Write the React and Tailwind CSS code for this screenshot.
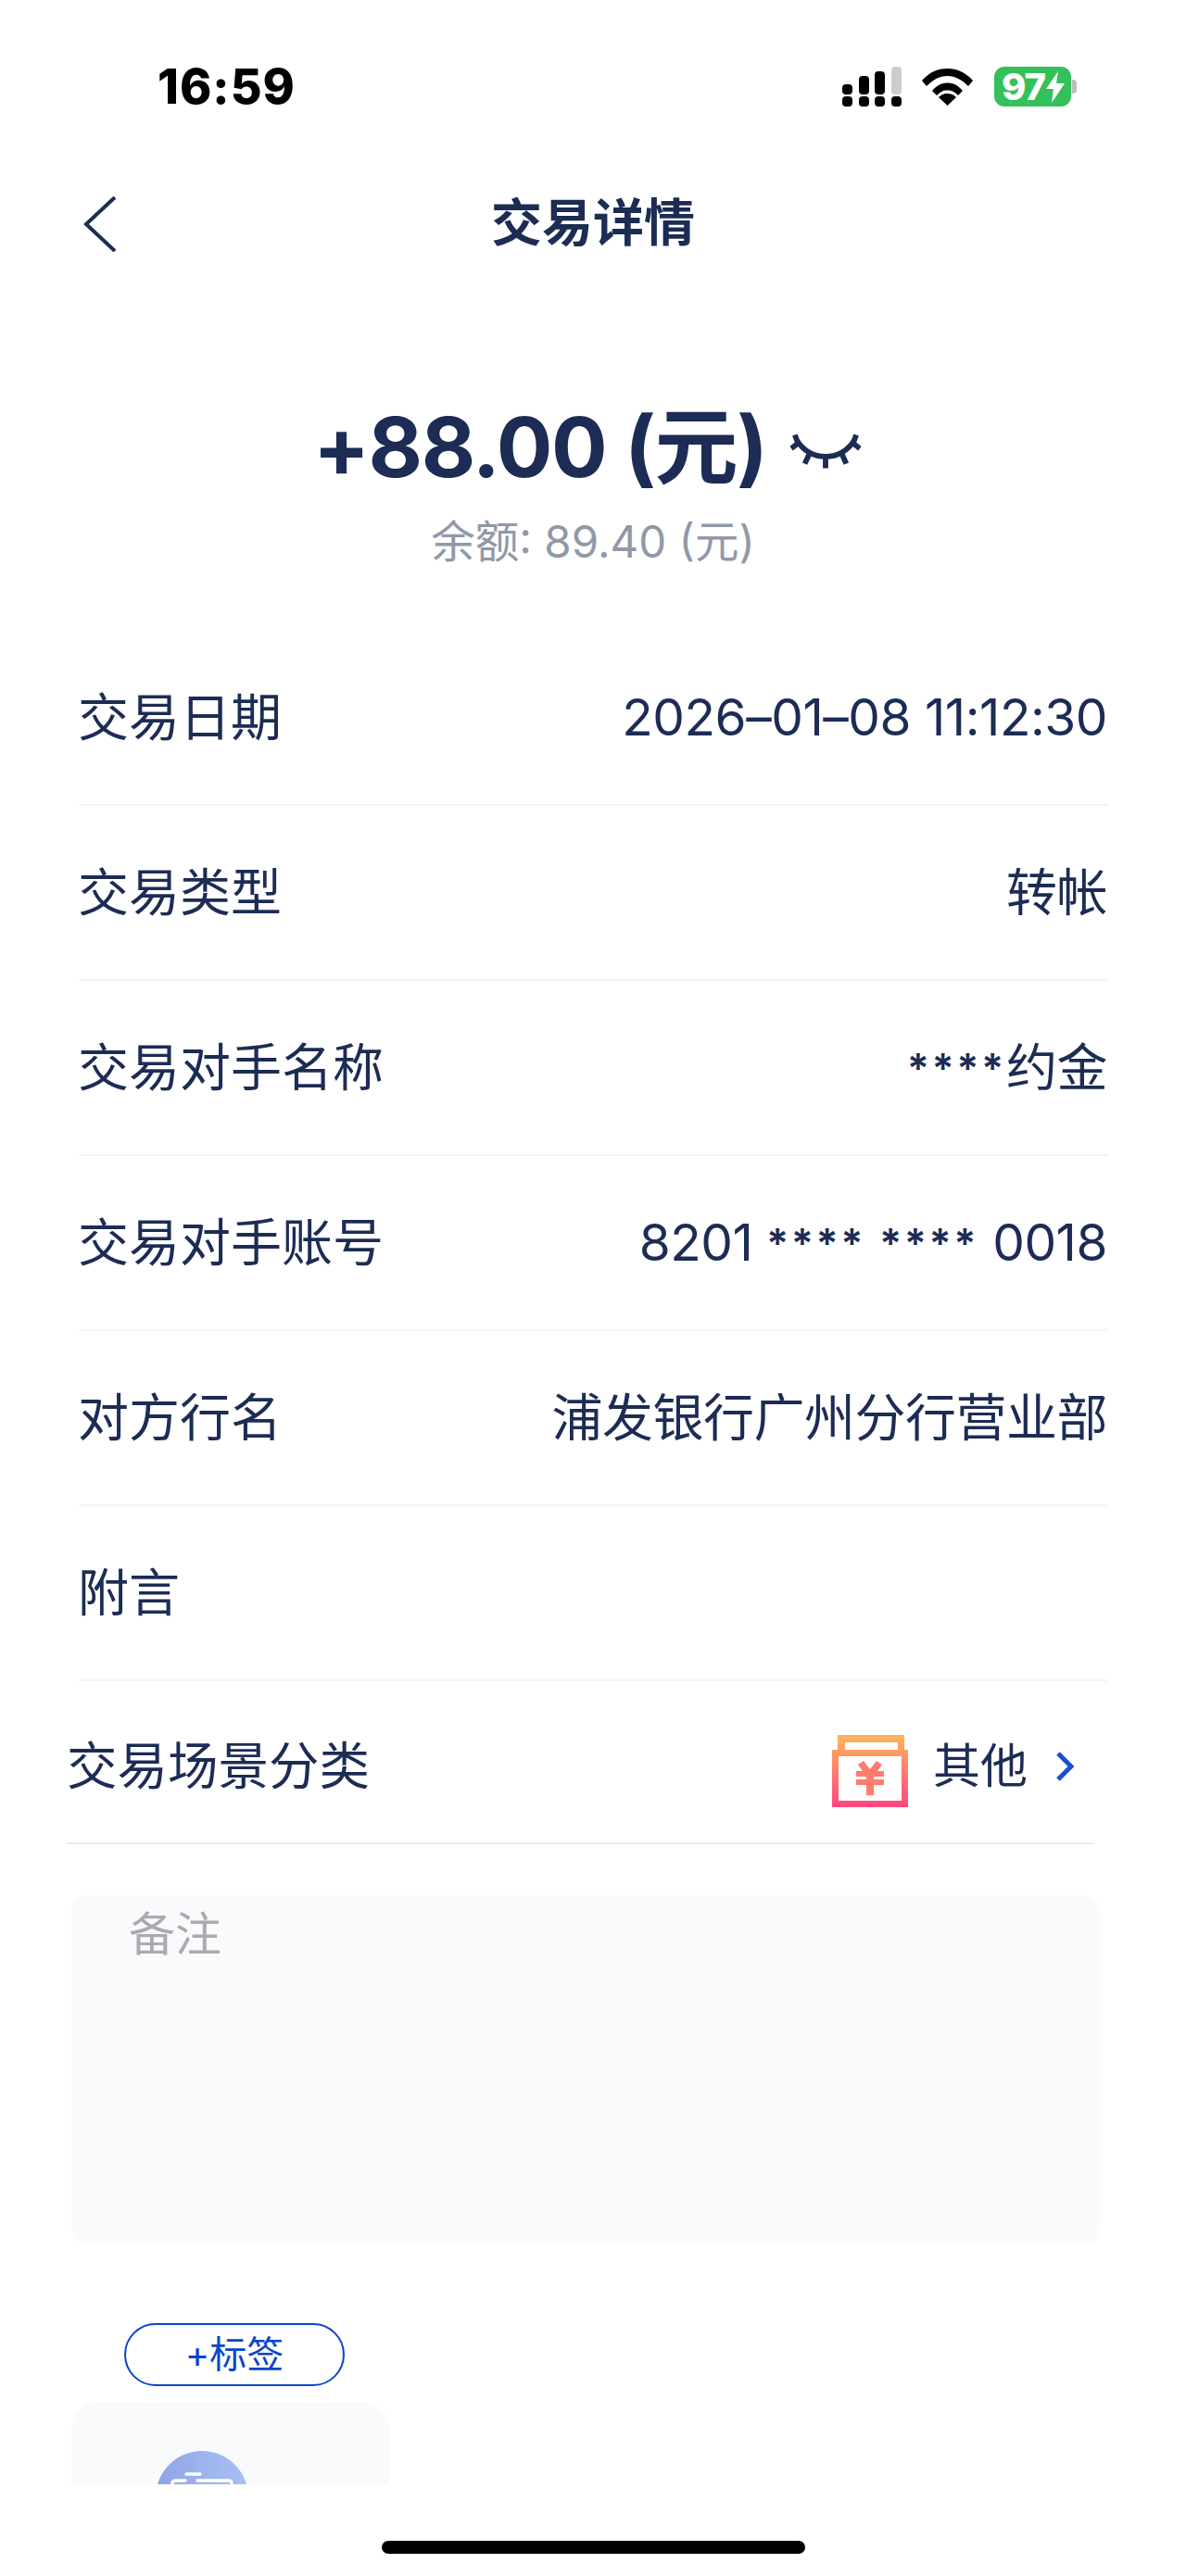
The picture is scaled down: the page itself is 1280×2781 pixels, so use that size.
import React from "react";

function Stars() {
  return <span className="align-[3px] text-[44px] font-semibold tracking-[3px]">****</span>;
}

function Row({ label, value }) {
  return (
    <div className="ml-[85px] mr-[85px] flex h-[189px] items-center justify-between border-b-2 border-[#f3f4f6] text-[55px] text-[#1c2c54]">
      <span className="-ml-[1px]">{label}</span>
      <span className="tracking-[-0.5px]">{value}</span>
    </div>
  );
}

function Signal() {
  const top = [[0, 19, 11], [18, 10, 20], [35, 5, 25]];
  return (
    <svg width="64" height="43" viewBox="0 0 64 43" className="block">
      {top.map(([x, y, h]) => <rect key={x} x={x} y={y} width="11" height={h} rx="4" fill="#000" />)}
      <rect x="53" y="0" width="11" height="30" rx="4" fill="#cccccc" />
      {[0, 18, 35, 53].map((x) => <rect key={x} x={x} y="32" width="11" height="11" rx="4" fill="#000" />)}
    </svg>
  );
}

function Wifi() {
  return (
    <svg width="55" height="40" viewBox="0 0 55 40" className="block">
      <path d="M0 13C8 4 17 0 27.500 0S47 4 55 13L50 19C43 12 36 8 27.500 8S12 12 5 19Z" fill="#000" />
      <path d="M11 24C16 18 21 15.500 27.500 15.500S39 18 44 24L39 29C35 25 32 23.500 27.500 23.500S20 25 16 29Z" fill="#000" />
      <path d="M27.500 40L18 31C21 28 24 27 27.500 27S34 28 37 31Z" fill="#000" />
    </svg>
  );
}

function Battery() {
  return (
    <div className="flex items-center">
      <div className="flex h-[43px] w-[83px] items-center justify-center rounded-[11px] bg-[#34c15c] pl-[2px] font-['Inter'] text-[40px] font-extrabold leading-none text-white">
        <span className="tracking-[-1px]">97</span>
        <svg width="22" height="34" viewBox="0 0 22 34" className="block">
          <path d="M14 0L1 19H9L7 34L21 13H12Z" fill="#fff" />
        </svg>
      </div>
      <div className="ml-[1px] h-[15px] w-[5px] rounded-r-[4px] bg-[#bdbdbd]" />
    </div>
  );
}

function StatusBar() {
  return (
    <div className="flex h-[188px] items-start justify-between pl-[170px] pr-[118px] pt-[72px]">
      <span className="font-['Inter'] text-[52px] font-extrabold leading-[44px] tracking-[1px] text-black">16:59</span>
      <div className="flex items-center">
        <Signal />
        <div className="ml-[22px]"><Wifi /></div>
        <div className="ml-[23px]"><Battery /></div>
      </div>
    </div>
  );
}

function Nav() {
  return (
    <div className="relative flex h-[104px] items-center justify-center">
      <svg width="36" height="60" viewBox="0 0 36 60" className="absolute left-[90px] top-[24px]">
        <path d="M34 1L3 30L34 59" fill="none" stroke="#1c2c54" strokeWidth="4" />
      </svg>
      <span className="text-[55px] font-bold text-[#1c2c54]">交易详情</span>
    </div>
  );
}

function ClosedEye() {
  return (
    <svg width="76" height="38" viewBox="0 0 78 38" className="block">
      <path d="M7 7C15 19 25 25 39 25S63 19 71 7" fill="none" stroke="#1c2c54" strokeWidth="6" />
      <path d="M39 25V38M21 22L16 33M57 22L62 33M9 10L1 16M69 10L77 16M8 9L5 1M70 9L73 1" fill="none" stroke="#1c2c54" strokeWidth="6" />
    </svg>
  );
}

function CategoryIcon() {
  return (
    <svg width="82" height="78" viewBox="0 0 82 78" className="block">
      <defs>
        <linearGradient id="g" x1="0" y1="0" x2="0" y2="1">
          <stop offset="0" stopColor="#ffb55c" />
          <stop offset="1" stopColor="#ff4580" />
        </linearGradient>
      </defs>
      <path fillRule="evenodd" d="M6 0H78V16H82V78H0V16H6ZM14 8V16H71V8ZM7 23V71H75V23Z" fill="url(#g)" />
      <path d="M28 32L34 28L41 37L48 28L54 32L49 39H56V45H45V48H56V54H45V65H37V54H26V48H37V45H26V39H33Z" fill="#ff7b6e" />
    </svg>
  );
}

function CircleGlyph() {
  return (
    <svg width="100" height="100" viewBox="0 0 100 100" className="block">
      <defs>
        <linearGradient id="c" x1="0" y1="0" x2="1" y2="0">
          <stop offset="0" stopColor="#8fa5e4" />
          <stop offset="1" stopColor="#a8c0f5" />
        </linearGradient>
      </defs>
      <circle cx="50" cy="50" r="50" fill="url(#c)" />
      <path d="M33 25H48M18 38V35Q18 32 22 32H32M45 32H78Q82 32 82 35V38" fill="none" stroke="#fff" strokeWidth="3.500" strokeLinecap="round" />
    </svg>
  );
}

export default function App() {
  return (
    <div className="relative h-[2781px] w-[1280px] overflow-hidden bg-white font-['Inter','Noto_Sans_CJK_SC',sans-serif]">
      <StatusBar />
      <Nav />

      <div className="mt-[141px] flex items-center pl-[338px]">
        <span className="text-[90px] font-bold leading-[100px] tracking-[-1.500px] text-[#1c2c54]">+88.00 (元)</span>
        <div className="ml-[26px] mt-[8px]"><ClosedEye /></div>
      </div>
      <div className="mt-[22px] text-center text-[47.500px] leading-[60px] text-[#9298a8]">余额: 89.40 (元)</div>

      <div className="mt-[66px]">
        <Row label="交易日期" value="2026–01–08 11:12:30" />
        <Row label="交易类型" value="转帐" />
        <Row label="交易对手名称" value={<><Stars />约金</>} />
        <Row label="交易对手账号" value={<>8201 <Stars /> <Stars /> 0018</>} />
        <Row label="对方行名" value="浦发银行广州分行营业部" />
        <Row label="附言" value="" />
      </div>

      <div className="ml-[72px] mr-[99px] flex h-[176px] items-center border-b-2 border-[#e8edf3] pt-[10px] text-[#1c2c54]">
        <span className="text-[54.500px]">交易场景分类</span>
        <div className="ml-auto mr-[22px] flex items-center">
          <div className="mt-[10px]"><CategoryIcon /></div>
          <span className="ml-[27px] text-[51px]">其他</span>
          <svg width="20" height="32" viewBox="0 0 20 32" className="ml-[30px] block">
            <path d="M3 2L17 16L3 30" fill="none" stroke="#1a4fd0" strokeWidth="5" />
          </svg>
        </div>
      </div>

      <div className="ml-[77px] mr-[93px] mt-[55px] h-[376px] rounded-[16px] bg-[#f9fafc] pl-[62px] text-[50px] leading-[84px] text-[#a9abaf]">备注</div>

      <div className="ml-[134px] mt-[86px] flex h-[68px] w-[238px] items-center justify-center rounded-full border-[2.500px] border-[#0a45cc] text-[40px] text-[#0a45cc]">+标签</div>

      <div className="ml-[77px] mt-[17px] h-[89px] w-[343px] overflow-hidden rounded-t-[30px] bg-[#f9fafc]">
        <div className="flex items-start pl-[91px] pt-[53px]">
          <div className="shrink-0"><CircleGlyph /></div>
          <span className="ml-[19px] mt-[30px] text-[40px] text-[#1c2c54]">交</span>
        </div>
      </div>

      <div className="mt-[61px] flex justify-center">
        <div className="h-[14px] w-[457px] rounded-full bg-black" />
      </div>
    </div>
  );
}
